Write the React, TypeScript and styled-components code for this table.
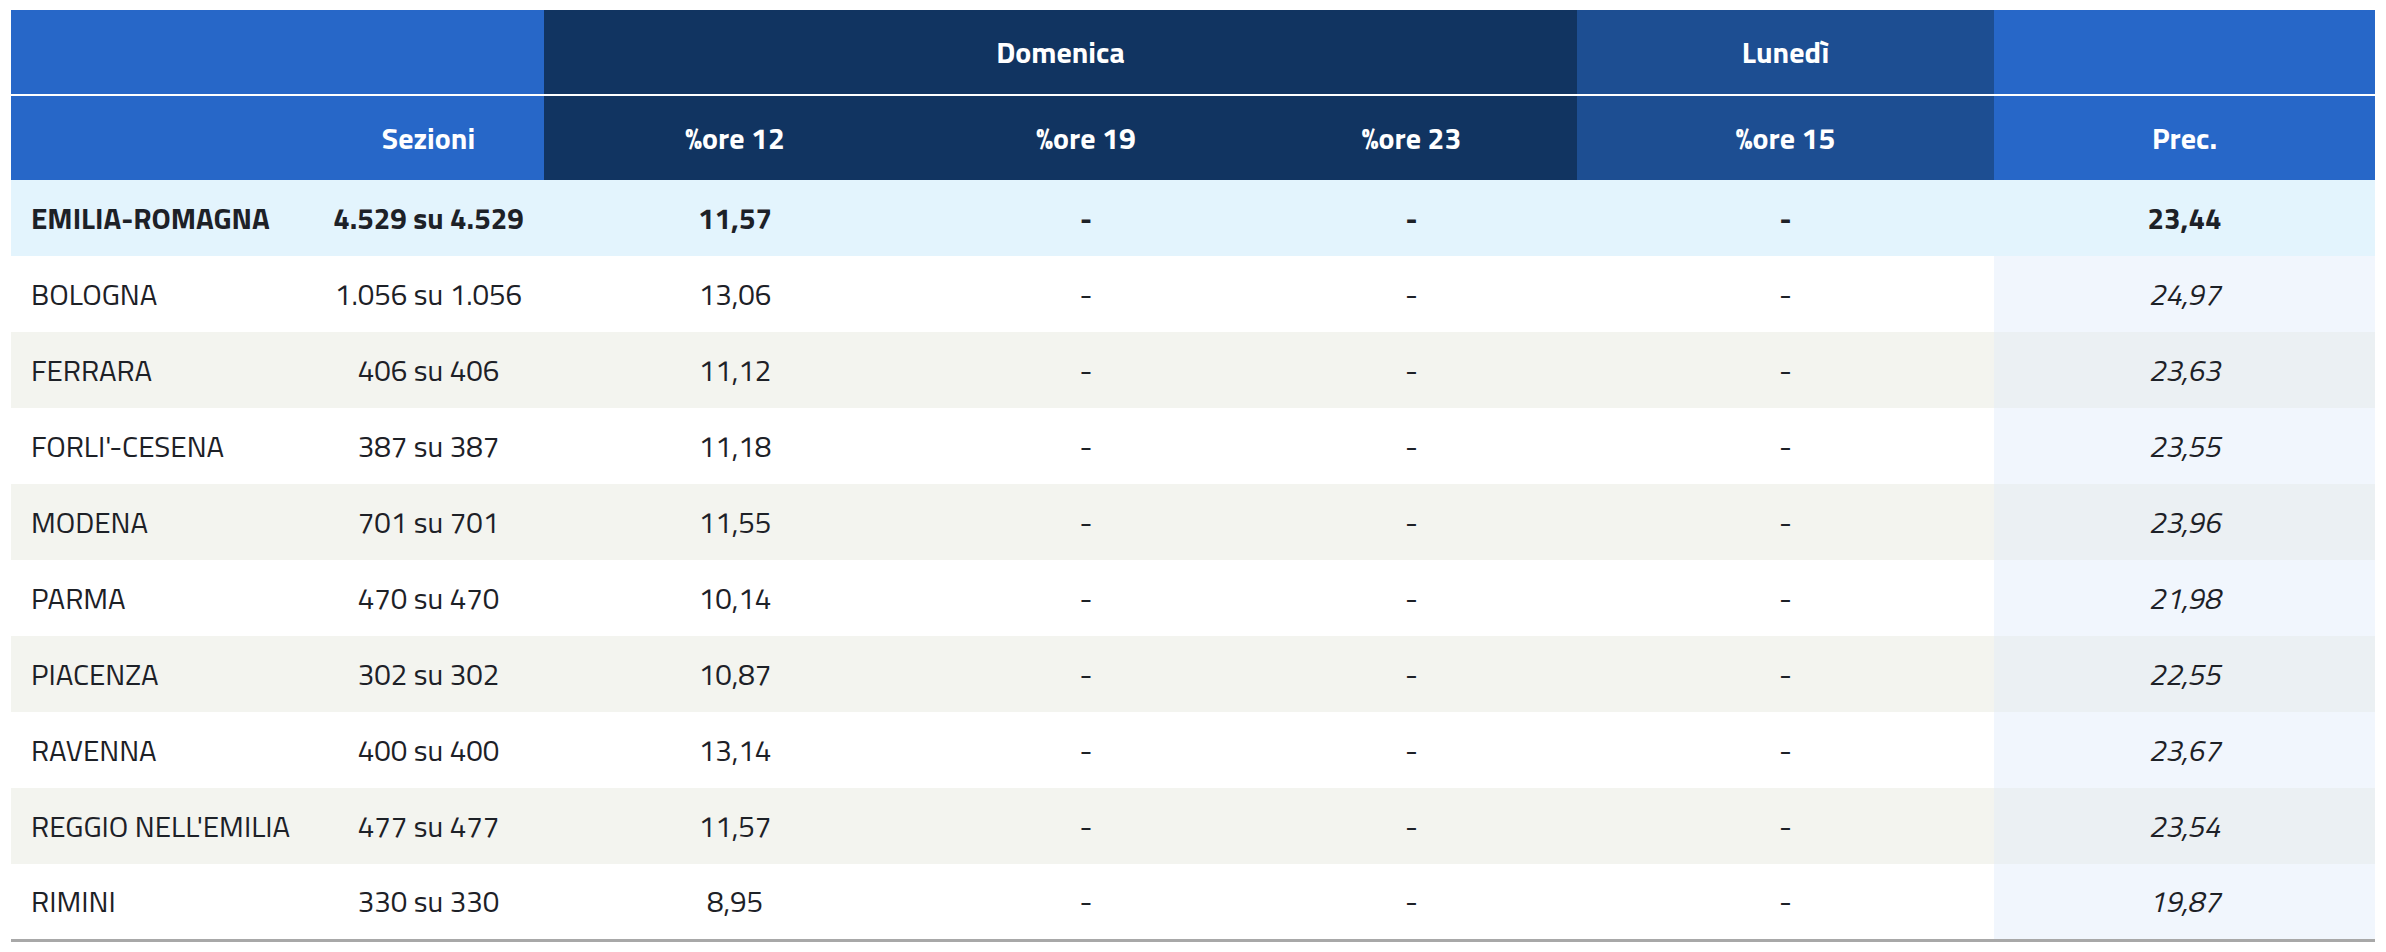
import React from "react";
import styled, { createGlobalStyle, css } from "styled-components";

type Tone = "blue" | "navy" | "mid";

type Row = {
  name: string;
  sezioni: string;
  ore12: string;
  ore19: string;
  ore23: string;
  ore15: string;
  prec: string;
};

const GlobalStyle = createGlobalStyle`
  html, body {
    margin: 0;
    padding: 0;
    background: #fff;
  }
  body {
    font-family: "Titillium Web", Roboto, "Liberation Sans", sans-serif;
    color: #1d2127;
  }
`;

const tones = {
  blue: "#2767c8",
  navy: "#113461",
  mid: "#1d4e92",
};

const Wrapper = styled.div`
  padding: 10px 11px 0 11px;
`;

const Table = styled.table`
  width: 2364px;
  table-layout: fixed;
  border-collapse: collapse;
  border-bottom: 3px solid #a8a8a8;
  font-size: 29.5px;
`;

const HeadRow = styled.tr<{ $top?: boolean }>`
  ${(p) =>
    p.$top &&
    css`
      th {
        border-bottom: 2px solid #fff;
      }
    `}
`;

const Th = styled.th<{ $tone: Tone }>`
  height: 84px;
  padding: 0;
  background: ${(p) => tones[p.$tone]};
  color: #fff;
  font-size: 30px;
  font-weight: 700;
  text-align: center;
  vertical-align: middle;
`;

const BodyRow = styled.tr<{ $total?: boolean; $alt?: boolean }>`
  height: 76px;
  background: ${(p) => (p.$total ? "#e3f4fd" : p.$alt ? "#f3f4ef" : "#fff")};
  font-weight: ${(p) => (p.$total ? 700 : 400)};
`;

const Td = styled.td<{ $align?: "left" | "center" }>`
  padding: 0;
  text-align: ${(p) => p.$align ?? "center"};
  vertical-align: middle;
  white-space: nowrap;
`;

const NameCell = styled(Td)`
  padding-left: 20px;
`;

const PrecCell = styled(Td)<{ $total?: boolean; $alt?: boolean }>`
  font-style: ${(p) => (p.$total ? "normal" : "italic")};
  background: ${(p) =>
    p.$total ? "transparent" : p.$alt ? "#ebf0f3" : "#f1f6fd"};
`;

const total: Row = {
  name: "EMILIA-ROMAGNA",
  sezioni: "4.529 su 4.529",
  ore12: "11,57",
  ore19: "-",
  ore23: "-",
  ore15: "-",
  prec: "23,44",
};

const rows: Row[] = [
  ["BOLOGNA", "1.056 su 1.056", "13,06", "24,97"],
  ["FERRARA", "406 su 406", "11,12", "23,63"],
  ["FORLI'-CESENA", "387 su 387", "11,18", "23,55"],
  ["MODENA", "701 su 701", "11,55", "23,96"],
  ["PARMA", "470 su 470", "10,14", "21,98"],
  ["PIACENZA", "302 su 302", "10,87", "22,55"],
  ["RAVENNA", "400 su 400", "13,14", "23,67"],
  ["REGGIO NELL'EMILIA", "477 su 477", "11,57", "23,54"],
  ["RIMINI", "330 su 330", "8,95", "19,87"],
].map(([name, sezioni, ore12, prec]) => ({
  name,
  sezioni,
  ore12,
  ore19: "-",
  ore23: "-",
  ore15: "-",
  prec,
}));

const widths = [302, 231, 382, 320, 331, 417, 381];

const DataRow = ({ row, total, alt }: { row: Row; total?: boolean; alt?: boolean }) => (
  <BodyRow $total={total} $alt={alt}>
    <NameCell $align="left">{row.name}</NameCell>
    <Td>{row.sezioni}</Td>
    <Td>{row.ore12}</Td>
    <Td>{row.ore19}</Td>
    <Td>{row.ore23}</Td>
    <Td>{row.ore15}</Td>
    <PrecCell $total={total} $alt={alt}>
      {row.prec}
    </PrecCell>
  </BodyRow>
);

const App = () => {
  return (
    <>
      <GlobalStyle />
      <Wrapper>
        <Table>
          <colgroup>
            {widths.map((w, i) => (
              <col key={i} style={{ width: w }} />
            ))}
          </colgroup>
          <thead>
            <HeadRow $top>
              <Th $tone="blue" colSpan={2} />
              <Th $tone="navy" colSpan={3}>
                Domenica
              </Th>
              <Th $tone="mid">Lunedì</Th>
              <Th $tone="blue" />
            </HeadRow>
            <HeadRow>
              <Th $tone="blue" />
              <Th $tone="blue">Sezioni</Th>
              <Th $tone="navy">%ore 12</Th>
              <Th $tone="navy">%ore 19</Th>
              <Th $tone="navy">%ore 23</Th>
              <Th $tone="mid">%ore 15</Th>
              <Th $tone="blue">Prec.</Th>
            </HeadRow>
          </thead>
          <tbody>
            <DataRow row={total} total />
            {rows.map((r, i) => (
              <DataRow key={r.name} row={r} alt={i % 2 === 1} />
            ))}
          </tbody>
        </Table>
      </Wrapper>
    </>
  );
};

export default App;
